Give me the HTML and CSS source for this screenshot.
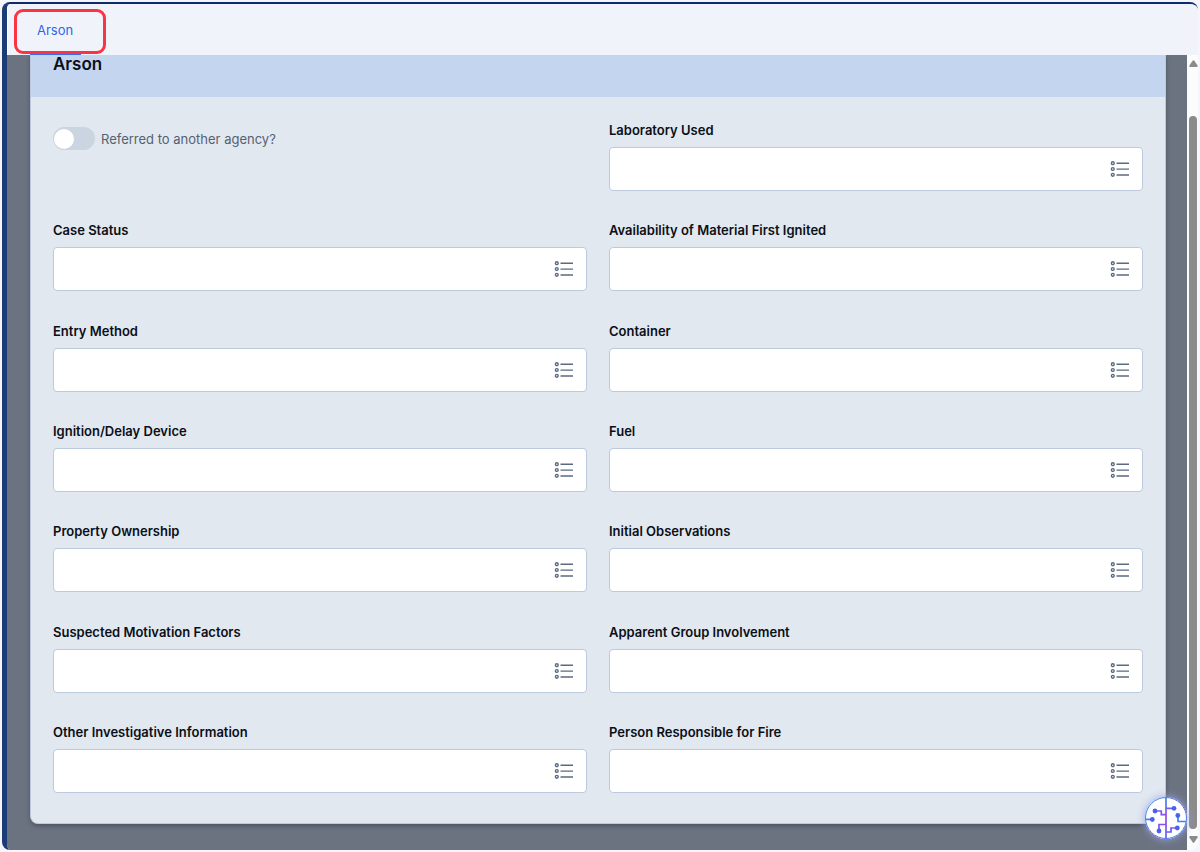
FILE: index.html
```html
<!DOCTYPE html>
<html lang="en">
<head>
<meta charset="utf-8">
<title>Arson</title>
<meta name="viewport" content="width=device-width, initial-scale=1">
<link rel="stylesheet" href="styles.css">
</head>
<body>
<svg class="defs" aria-hidden="true">
  <symbol id="list" viewBox="0 0 20 18">
    <g fill="none" stroke="#5b6a80" stroke-width="1.4">
      <circle cx="2.8" cy="3.2" r="1.4"/><circle cx="2.8" cy="9" r="1.4"/><circle cx="2.8" cy="14.8" r="1.4"/>
      <path d="M6.5 3.3H19M6.5 9.1H19M6.5 15H19"/>
    </g>
  </symbol>
</svg>
<div class="window">
  <nav class="tabs"><a class="tab" href="#arson">Arson</a><span class="highlight"></span></nav>
  <div class="body">
    <main class="stage">
      <section class="card" id="arson">
        <h1 class="card-title">Arson</h1>
        <form class="fields">
          <label class="toggle"><input class="switch" type="checkbox" role="switch"><span>Referred to another agency?</span></label>
          <div class="field"><label for="f1">Laboratory Used</label><div class="box"><input id="f1" type="text"><button type="button" aria-label="Choose laboratory"><svg><use href="#list"/></svg></button></div></div>
          <div class="field"><label for="f2">Case Status</label><div class="box"><input id="f2" type="text"><button type="button" aria-label="Choose case status"><svg><use href="#list"/></svg></button></div></div>
          <div class="field"><label for="f3">Availability of Material First Ignited</label><div class="box"><input id="f3" type="text"><button type="button" aria-label="Choose availability"><svg><use href="#list"/></svg></button></div></div>
          <div class="field"><label for="f4">Entry Method</label><div class="box"><input id="f4" type="text"><button type="button" aria-label="Choose entry method"><svg><use href="#list"/></svg></button></div></div>
          <div class="field"><label for="f5">Container</label><div class="box"><input id="f5" type="text"><button type="button" aria-label="Choose container"><svg><use href="#list"/></svg></button></div></div>
          <div class="field"><label for="f6">Ignition/Delay Device</label><div class="box"><input id="f6" type="text"><button type="button" aria-label="Choose device"><svg><use href="#list"/></svg></button></div></div>
          <div class="field"><label for="f7">Fuel</label><div class="box"><input id="f7" type="text"><button type="button" aria-label="Choose fuel"><svg><use href="#list"/></svg></button></div></div>
          <div class="field"><label for="f8">Property Ownership</label><div class="box"><input id="f8" type="text"><button type="button" aria-label="Choose ownership"><svg><use href="#list"/></svg></button></div></div>
          <div class="field"><label for="f9">Initial Observations</label><div class="box"><input id="f9" type="text"><button type="button" aria-label="Choose observations"><svg><use href="#list"/></svg></button></div></div>
          <div class="field"><label for="f10">Suspected Motivation Factors</label><div class="box"><input id="f10" type="text"><button type="button" aria-label="Choose motivation"><svg><use href="#list"/></svg></button></div></div>
          <div class="field"><label for="f11">Apparent Group Involvement</label><div class="box"><input id="f11" type="text"><button type="button" aria-label="Choose group involvement"><svg><use href="#list"/></svg></button></div></div>
          <div class="field"><label for="f12">Other Investigative Information</label><div class="box"><input id="f12" type="text"><button type="button" aria-label="Choose information"><svg><use href="#list"/></svg></button></div></div>
          <div class="field"><label for="f13">Person Responsible for Fire</label><div class="box"><input id="f13" type="text"><button type="button" aria-label="Choose person"><svg><use href="#list"/></svg></button></div></div>
        </form>
      </section>
    </main>
    <div class="scrollbar" aria-hidden="true">
      <svg class="arrow" viewBox="0 0 9 7"><path d="M3.6 .8Q4.5-.2 5.4.8L8.6 5.4Q9 7 7.8 7H1.2Q0 7 .4 5.4Z"/></svg>
      <div class="thumb"></div>
      <svg class="arrow" viewBox="0 0 9 7"><path d="M3.6 6.2Q4.5 7.2 5.4 6.2L8.6 1.6Q9 0 7.8 0H1.2Q0 0 .4 1.6Z"/></svg>
    </div>
  </div>
</div>
<button class="assistant" type="button" aria-label="Assistant">
  <svg viewBox="0 0 42 42">
    <defs><linearGradient id="ring" x1="0" y1="0" x2="1" y2="1"><stop offset="0" stop-color="#2e9bea"/><stop offset=".55" stop-color="#6a5cf0"/><stop offset="1" stop-color="#2e9bea"/></linearGradient>
    <linearGradient id="stem" gradientUnits="userSpaceOnUse" x1="0" y1="0" x2="0" y2="42"><stop offset="0" stop-color="#2e8fe8"/><stop offset=".5" stop-color="#a044ea"/><stop offset="1" stop-color="#4d6cf0"/></linearGradient></defs>
    <circle cx="21" cy="21" r="20.5" fill="#fff" stroke="url(#ring)"/>
    <g fill="none" stroke="url(#stem)" stroke-width="1.7">
      <path d="M21 1V41"/><path d="M21 11.3H28.5M21 17.6H16.3V14H10M21 27.5H14V33M21 35H26V31H32"/><path d="M33 18V24.5H41M1 22.3H7" stroke="#3c85ec"/>
    </g>
    <g fill="#4b61ee"><circle cx="29" cy="11.3" r="2.4"/><circle cx="10" cy="14" r="2.4"/><circle cx="7.3" cy="22.5" r="2.4"/><circle cx="14" cy="34" r="2.4"/><circle cx="32.3" cy="31" r="2.4"/><circle cx="32.8" cy="18.5" r="2.4"/></g>
  </svg>
</button>
</body>
</html>
```
FILE: styles.css
```css
* { box-sizing: border-box; }
body {
  margin: 0;
  padding: 2px;
  min-height: 100vh;
  display: flex;
  background: #f5f5fb;
  font: 13px/18px Inter, sans-serif;
  color: #0b0f17;
}
.defs { position: absolute; width: 0; height: 0; }
.window {
  flex: 1;
  display: flex;
  flex-direction: column;
  border-top: 2px solid #0d2c6b;
  border-left: 5px solid #1b3c75;
  border-radius: 8px;
  overflow: hidden;
}
.tabs {
  position: relative;
  display: flex;
  padding-left: 22px;
  background: #f0f4fa;
  border-left: 1px solid #fff;
}
.tab {
  padding: 17px 8px 14px 7px;
  border-bottom: 2px solid #3b6be8;
  color: #2f65ec;
  text-decoration: none;
}
.highlight {
  position: absolute;
  left: 6px;
  top: 5px;
  width: 92px;
  height: 45px;
  border: 3px solid #f93545;
  border-radius: 9px;
  pointer-events: none;
}
.body { flex: 1; display: flex; }
.stage {
  flex: 1;
  display: flex;
  padding: 0 21px 26px 22px;
  background: #6b7280;
  border-left: 1px solid #65728c;
}
.card {
  flex: 1;
  display: flex;
  flex-direction: column;
  background: #e1e8f0;
  border: 1px solid #bdc9dc;
  border-top: 0;
  border-radius: 0 0 8px 8px;
  box-shadow: 0 2px 4px #4b5563;
}
.card-title {
  margin: 0;
  padding: 0 22px 24px;
  background: #c4d5ef;
  font-size: 17px;
  line-height: 18px;
  font-weight: 600;
}
.fields {
  flex: 1;
  display: grid;
  grid-template-columns: 1fr 1fr;
  column-gap: 22px;
  row-gap: 20px;
  align-content: space-between;
  padding: 24px 22px 30px;
}
.field { display: flex; flex-direction: column; gap: 8px; }
.field label { font-weight: 600; }
.box {
  display: flex;
  height: 44px;
  background: #fff;
  border: 1px solid #bdc9dc;
  border-radius: 4px;
}
.box input {
  flex: 1;
  min-width: 0;
  padding: 0 12px;
  border: 0;
  background: transparent;
  font: inherit;
}
.box button {
  display: flex;
  align-items: center;
  padding: 0 12px;
  border: 0;
  background: transparent;
}
.box svg { width: 20px; height: 18px; }
.toggle {
  display: flex;
  align-items: center;
  align-self: start;
  gap: 6px;
  padding-top: 6px;
  color: #566171;
}
.switch {
  appearance: none;
  display: flex;
  align-items: center;
  width: 42px;
  height: 23px;
  margin: 0;
  padding: 1px;
  border-radius: 12px;
  background: #cbd5e1;
}
.switch::before {
  content: "";
  width: 20px;
  height: 20px;
  border-radius: 50%;
  background: #fff;
}
.scrollbar {
  display: flex;
  flex-direction: column;
  align-items: center;
  width: 11px;
  padding: 5px 0 7px 1px;
  background: #fcfcfc;
}
.arrow { width: 9px; height: 7px; fill: #8b8b8b; }
.thumb {
  flex: 1;
  width: 8px;
  margin: 49px 0 7px;
  border-radius: 4px;
  background: #8b8b8b;
}
.assistant {
  position: fixed;
  right: 13px;
  bottom: 13px;
  width: 42px;
  height: 42px;
  padding: 0;
  border: 0;
  border-radius: 50%;
  background: #fff;
  box-shadow: 0 0 8px #9aa5e8;
}
.assistant svg { display: block; }
```
